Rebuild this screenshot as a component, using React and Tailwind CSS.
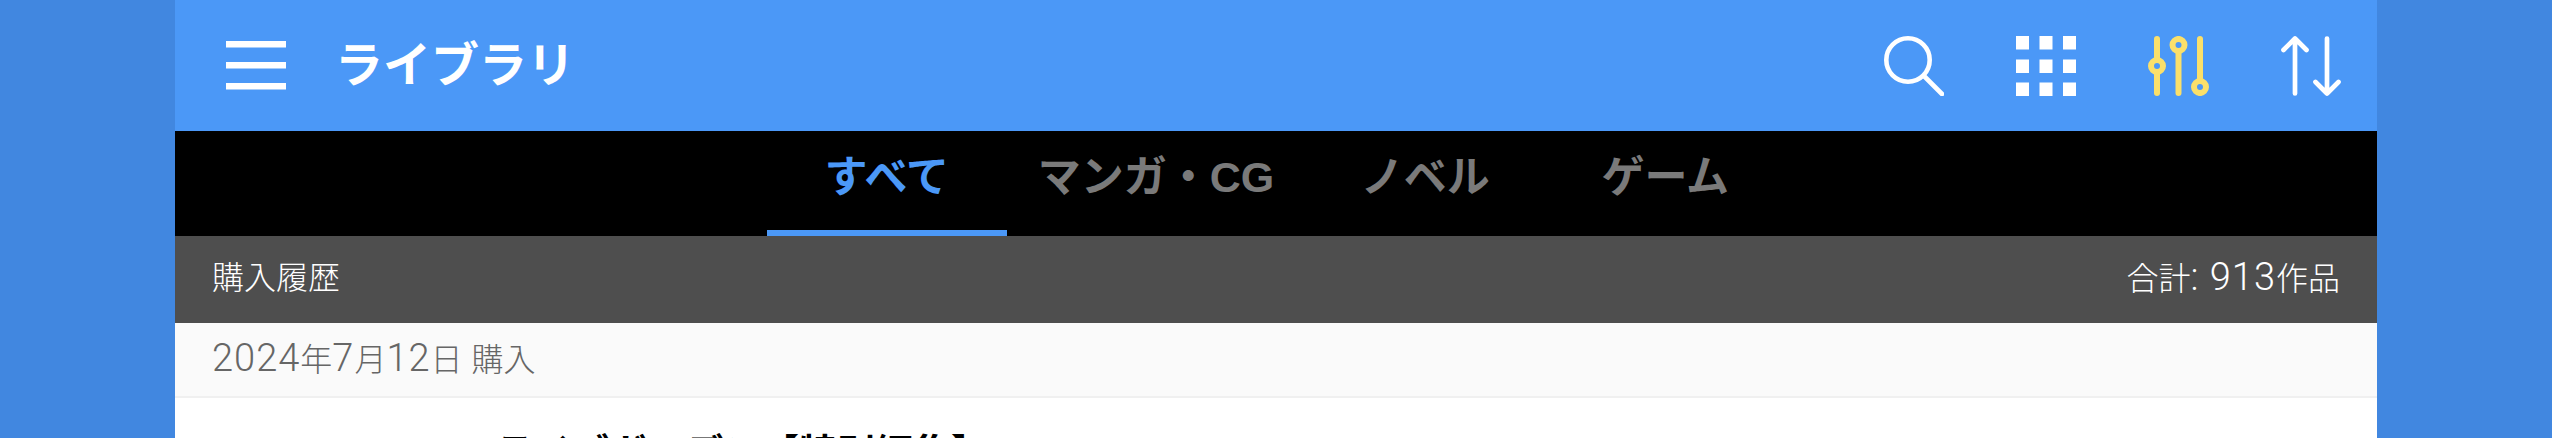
import React from 'react';

const font = 'font-["Liberation_Sans","Noto_Sans_CJK_JP",sans-serif]';

const MenuIcon = () => (
  <svg width="60" height="49" viewBox="0 0 60 49" fill="#fff">
    <rect y="0" width="60" height="6.5" />
    <rect y="21" width="60" height="6.5" />
    <rect y="42" width="60" height="6.5" />
  </svg>
);

const SearchIcon = () => (
  <svg width="60" height="60" viewBox="0 0 60 60" fill="none" stroke="#fff" strokeWidth="4.6" strokeLinecap="round">
    <circle cx="24" cy="24" r="21.7" />
    <path d="M40 40 L58 58" />
  </svg>
);

const GridIcon = () => (
  <svg width="60" height="60" viewBox="0 0 60 60" fill="#fff">
    <rect x="0" y="0" width="13" height="13.5" />
    <rect x="23.5" y="0" width="13" height="13.5" />
    <rect x="47" y="0" width="13" height="13.5" />
    <rect x="0" y="23.5" width="13" height="13.5" />
    <rect x="23.5" y="23.5" width="13" height="13.5" />
    <rect x="47" y="23.5" width="13" height="13.5" />
    <rect x="0" y="46.5" width="13" height="13.5" />
    <rect x="23.5" y="46.5" width="13" height="13.5" />
    <rect x="47" y="46.5" width="13" height="13.5" />
  </svg>
);

const SlidersIcon = () => (
  <svg width="61" height="60" viewBox="0 0 61 60" fill="none">
    <g stroke="#fbe06a" strokeWidth="6" strokeLinecap="round">
      <path d="M9 3 V57" />
      <path d="M30.5 3 V57" />
      <path d="M52 3 V57" />
    </g>
    <circle cx="9" cy="30" r="6" fill="#4b98f7" stroke="#fbe06a" strokeWidth="6" />
    <circle cx="30.5" cy="9" r="6" fill="#4b98f7" stroke="#fbe06a" strokeWidth="6" />
    <circle cx="52" cy="51" r="6" fill="#4b98f7" stroke="#fbe06a" strokeWidth="6" />
  </svg>
);

const SortIcon = () => (
  <svg width="60" height="60" viewBox="0 0 60 60" fill="none" stroke="#fff" strokeWidth="4.7" strokeLinecap="round" strokeLinejoin="round">
    <path d="M14 2.5 V57.5 M2.5 14 L14 2.5 L25.5 14" />
    <path d="M46 2.5 V57.5 M34.5 46 L46 57.5 L57.5 46" />
  </svg>
);

// digits run bigger and lighter than the kana around them
const Num = ({ children }) => (
  <span className='font-["Roboto",sans-serif] text-[38px] font-light tracking-[1px]'>{children}</span>
);

const tabs = [
  { label: 'すべて', active: true },
  { label: 'マンガ・CG' },
  { label: 'ノベル' },
  { label: 'ゲーム' },
];

export default function App() {
  return (
    <div className={`h-[438px] overflow-hidden bg-[#4187e0] ${font}`}>
      <div className="mx-auto w-[2202px] h-[438px] overflow-hidden bg-white">
        <header className="h-[131px] bg-[#4b98f7] flex items-center pl-[51px] pr-[36px]">
          <MenuIcon />
          <h1 className="ml-[49px] text-[48px] font-semibold text-white leading-none">ライブラリ</h1>
          <div className="ml-auto flex items-center gap-[72px]">
            <SearchIcon />
            <GridIcon />
            <SlidersIcon />
            <SortIcon />
          </div>
        </header>

        <nav className="h-[105px] bg-black flex justify-center">
          {tabs.map((tab) => (
            <div
              key={tab.label}
              className={`min-w-[240px] px-[31px] pb-1.5 flex items-center justify-center text-[43px] font-bold border-b-[6px] ${
                tab.active ? 'text-[#4b98f7] border-[#4b98f7]' : 'text-[#7a7a7a] border-transparent'
              }`}
            >
              {tab.label}
            </div>
          ))}
        </nav>

        <div className="h-[87px] bg-[#4e4e4e] flex items-center justify-between px-[37px] pb-1 text-[32px] font-light text-white">
          <span>購入履歴</span>
          <span>
            合計<Num>: 913</Num>作品
          </span>
        </div>

        <div className="h-[75px] bg-[#fafafa] border-b-2 border-[#f0f0f0] flex items-center pl-[37px] pb-0.5 text-[32px] font-light text-[#666]">
          <span>
            <Num>2024</Num>年<Num>7</Num>月<Num>12</Num>日 購入
          </span>
        </div>

        <div className="pl-[320px] pt-[32px] text-[38px] font-bold text-black leading-tight whitespace-nowrap">
          ライブガーデン【特別編集】
        </div>
      </div>
    </div>
  );
}
